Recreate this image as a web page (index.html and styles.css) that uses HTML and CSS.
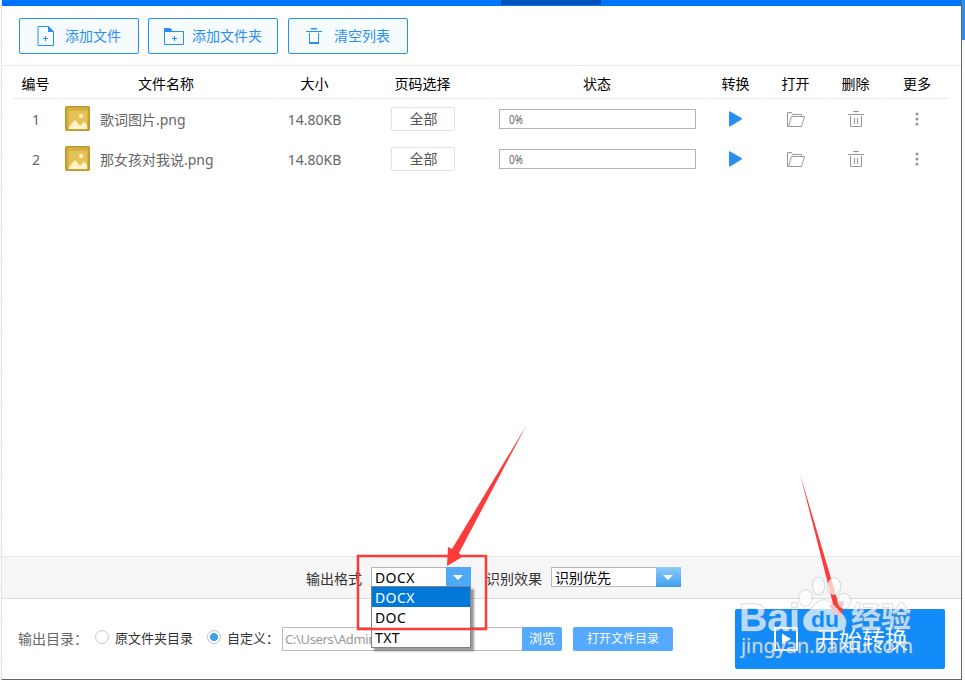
FILE: index.html
```html
<!DOCTYPE html>
<html lang="zh-CN">
<head>
  <meta charset="UTF-8">
  <meta name="viewport" content="width=device-width, initial-scale=1.0">
  <title>文件转换</title>
  <link rel="stylesheet" href="styles.css">
</head>
<body>
  <!-- shared icons -->
  <svg width="0" height="0" class="defs">
    <symbol id="picture" viewBox="0 0 25 25">
      <rect x=".75" y=".75" width="23.5" height="23.5" rx="1" fill="#d5b140" stroke="#bd9728" stroke-width="1.5"/>
      <rect x="4" y="5" width="18" height="18" fill="#e4c458"/>
      <path d="M4 23V21L10 14L15 20L19 15.500L22 19V23Z" fill="#fff3ca"/>
      <circle cx="16" cy="10" r="2" fill="#fff3ca"/>
    </symbol>
    <symbol id="play" viewBox="0 0 13 16">
      <path d="M0 1Q0 0 1.200 .5L12.500 7Q13.500 8 12.500 8.500L2 15Q0 16 0 14.500Z" fill="#2a8ff2"/>
    </symbol>
    <symbol id="open" viewBox="0 0 18 15">
      <path d="M1.500 14.500H.500V.500H4.500L5.500 2.500H14.500V4.500M1.500 14.500L4.500 4.500H17.500L14.500 14.500Z" fill="none" stroke="#999"/>
    </symbol>
    <symbol id="trash" viewBox="0 0 16 17">
      <path d="M5 .5H11M0 3.500H16M2.500 5V15.500H13.500V5M6.500 7V13M9.500 7V13" fill="none" stroke="#999"/>
    </symbol>
    <symbol id="dots" viewBox="0 0 4 14">
      <g fill="#999"><circle cx="2" cy="2" r="1.600"/><circle cx="2" cy="7" r="1.600"/><circle cx="2" cy="12" r="1.600"/></g>
    </symbol>
  </svg>

  <div class="window">
    <div class="titlebar"><div class="tab"></div></div>

    <div class="toolbar">
      <button class="tool">
        <svg width="18" height="20" viewBox="0 0 18 20" fill="none" stroke="#2a8ff2"><path d="M1 .5H11.500L16.500 5.500V19.500H1Z"/><path d="M11 0V6H17Z" fill="#2a8ff2" stroke="none"/><path d="M6 12.500H11M8.500 10V15"/></svg>
        <span>添加文件</span>
      </button>
      <button class="tool folder">
        <svg width="20" height="17" viewBox="0 0 20 17" fill="none" stroke="#2a8ff2"><path d="M.5 3.500H19.500V16.500H.500Z"/><path d="M0 0H6L8 2V4H0Z" fill="#2a8ff2" stroke="none"/><path d="M8 10.500H13M10.500 8V13"/></svg>
        <span>添加文件夹</span>
      </button>
      <button class="tool clear">
        <svg width="16" height="16" viewBox="0 0 16 16" fill="none" stroke="#2a8ff2"><path d="M5 .5H11" stroke-width="2"/><path d="M0 3.500H16M3.500 5V15.500M12.500 5V15.500"/><path d="M3 15H13" stroke-width="2"/></svg>
        <span>清空列表</span>
      </button>
    </div>

    <div class="files">
      <div class="row head">
        <div>编号</div><div>文件名称</div><div>大小</div><div>页码选择</div><div>状态</div><div>转换</div><div>打开</div><div>删除</div><div>更多</div>
      </div>
      <div class="row">
        <div>1</div>
        <div class="name"><svg width="25" height="25"><use href="#picture"/></svg><span>歌词图片.png</span></div>
        <div class="size">14.80KB</div>
        <div><button class="pages">全部</button></div>
        <div><div class="progress"><span>0%</span></div></div>
        <div class="convert"><svg width="13" height="16"><use href="#play"/></svg></div>
        <div><svg width="18" height="15"><use href="#open"/></svg></div>
        <div><svg width="16" height="17"><use href="#trash"/></svg></div>
        <div class="more"><svg width="4" height="14"><use href="#dots"/></svg></div>
      </div>
      <div class="row">
        <div>2</div>
        <div class="name"><svg width="25" height="25"><use href="#picture"/></svg><span>那女孩对我说.png</span></div>
        <div class="size">14.80KB</div>
        <div><button class="pages">全部</button></div>
        <div><div class="progress"><span>0%</span></div></div>
        <div class="convert"><svg width="13" height="16"><use href="#play"/></svg></div>
        <div><svg width="18" height="15"><use href="#open"/></svg></div>
        <div><svg width="16" height="17"><use href="#trash"/></svg></div>
        <div class="more"><svg width="4" height="14"><use href="#dots"/></svg></div>
      </div>
    </div>

    <div class="options">
      <label>输出格式</label>
      <div class="select format">
        <span>DOCX</span><i></i>
        <ul class="menu">
          <li class="active">DOCX</li>
          <li>DOC</li>
          <li>TXT</li>
        </ul>
      </div>
      <label class="effect-label">识别效果</label>
      <div class="select effect"><span>识别优先</span><i></i></div>
    </div>

    <div class="footer">
      <span class="dir-label">输出目录：</span>
      <i class="radio"></i><span class="radio-text source">原文件夹目录</span>
      <i class="radio checked"></i><span class="radio-text custom">自定义：</span>
      <div class="path">C:\Users\Admini</div>
      <button class="browse">浏览</button>
      <button class="open-dir">打开文件目录</button>
      <button class="start">
        <svg width="24" height="24" viewBox="0 0 24 24"><rect x="1" y="1" width="22" height="22" fill="none" stroke="#fff" stroke-width="2"/><path d="M8 6.500L17 12L8 17.500Z" fill="#fff"/></svg>
        <span>开始转换</span>
      </button>
    </div>
  </div>
  <div class="behind"></div>

  <!-- arrows and watermark over the window -->
  <svg class="marks" width="965" height="680" viewBox="0 0 965 680">
    <rect x="358" y="556" width="128" height="73" fill="none" stroke="#fd3b3b" stroke-width="2.500"/>
    <path d="M526 426L459 553L462 557L447 566L448 547L452 549Z" fill="#fd3b3b"/>
    <path d="M800 474L838 602L844 601L841 619L829 606L833 604L827 580Z" fill="#fd3b3b"/>
    <g class="watermark">
      <ellipse cx="805.500" cy="598" rx="6.500" ry="8"/>
      <ellipse cx="818.500" cy="586" rx="6" ry="8.500"/>
      <ellipse cx="834" cy="586.500" rx="6.500" ry="8.500"/>
      <ellipse cx="844" cy="601" rx="6.500" ry="7.500"/>
      <path d="M824 600C816 600 813 608 808 612C800 618 803 631 812 631H838C848 631 849 619 841 613C836 608 832 600 824 600Z"/>
      <text class="wm-bai" x="739" y="631" textLength="61" lengthAdjust="spacingAndGlyphs">Bai</text>
      <text class="wm-jy" x="851" y="628" textLength="60" lengthAdjust="spacingAndGlyphs">经验</text>
      <text class="wm-url" x="741" y="653" textLength="172" lengthAdjust="spacingAndGlyphs">jingyan.baidu.com</text>
    </g>
    <text class="wm-du" x="811" y="627" textLength="28" lengthAdjust="spacingAndGlyphs">du</text>
  </svg>
</body>
</html>
```

FILE: styles.css
```css
* {
  box-sizing: border-box;
}
body {
  margin: 0;
  width: 965px;
  height: 680px;
  display: flex;
  overflow: hidden;
  position: relative;
  font-family: "Noto Sans", "Noto Sans CJK SC", sans-serif;
  font-size: 14px;
  color: #666;
  padding-left: 1px;
  background: repeating-linear-gradient(#fafafa 0 35px, #e4e7ee 35px 36px) 0 12px;
}
button {
  font: inherit;
  padding: 0;
  border: none;
}
svg {
  display: block;
  flex: none;
}
.defs {
  position: absolute;
}
.window {
  width: 961px;
  height: 680px;
  display: flex;
  flex-direction: column;
  background: #fff;
  border-left: 1px solid #e3e4e8;
  border-right: 1px solid #666;
  border-bottom: 1px solid #666;
}
.behind {
  flex: 1;
  background: linear-gradient(#2a8ff2 40px, #fafafa 40px);
}
.titlebar {
  height: 6px;
  background: #0073ff;
  padding-left: 499px;
}
.tab {
  width: 100px;
  height: 5px;
  background: #0052b8;
}
.toolbar {
  height: 60px;
  padding: 12px 17px;
  display: flex;
  border-bottom: 1px solid #ebebeb;
}
.tool {
  display: flex;
  align-items: center;
  width: 120px;
  height: 36px;
  padding-left: 17px;
  border: 1px solid #2a8ff2;
  border-radius: 2px;
  background: #f5fbff;
  color: #2a8ff2;
  gap: 10px;
}
.tool span {
  padding-bottom: 2px;
}
.tool.folder {
  width: 130px;
  margin: 0 10px 0 9px;
  padding-left: 15px;
  gap: 8px;
}
.tool.clear {
  gap: 12px;
}

/* file list */
.files {
  flex: 1;
  padding-left: 11px;
}
.row {
  display: grid;
  grid-template-columns: 46px 211px 82px 130px 215px 58px 58px 58px 61px;
  column-gap: 2px;
  height: 40px;
}
.row > div {
  display: flex;
  align-items: center;
  justify-content: center;
}
.row.head {
  height: 33px;
  color: #000;
}
.row.head > div {
  border-bottom: 1px solid #ebebeb;
  padding: 1px 1px 0 0;
}
.row > .name {
  justify-content: flex-start;
  padding-left: 4px;
  gap: 10px;
}
.name svg {
  margin-bottom: 2px;
}
.row > .size {
  padding-right: 1px;
}
.row > .convert {
  padding: 0 2px 1px 0;
}
.row > .more {
  padding: 0 2px 1px 0;
}
.pages {
  width: 64px;
  height: 24px;
  border: 1px solid #dfe2ed;
  border-radius: 2px;
  background: #fff;
  color: #555;
  line-height: 22px;
  padding-left: 1px;
}
.progress {
  width: 197px;
  height: 20px;
  border: 1px solid #b4b4b4;
  padding-left: 9px;
  font-size: 12px;
  line-height: 19px;
}
.progress span {
  display: inline-block;
  transform: scaleX(0.82);
  transform-origin: left;
}

/* format options */
.options {
  height: 43px;
  background: #f6f6f6;
  border-top: 1px solid #e8e8e8;
  border-bottom: 1px solid #dcdcdc;
  display: flex;
  padding: 10px 0 0 304px;
  color: #333;
}
.options label {
  line-height: 24px;
  width: 65px;
}
.options .effect-label {
  margin-left: 15px;
}
.select {
  position: relative;
  height: 20px;
  width: 100px;
  border: 1px solid #b8b8b8;
  background: #fff;
  color: #000;
  display: flex;
  justify-content: space-between;
  line-height: 19px;
  padding-left: 3px;
}
.select.format {
  letter-spacing: 0.4px;
}
.select.effect {
  width: 130px;
}
.select i {
  width: 25px;
  margin: -1px -1px -1px 0;
  padding-right: 1px;
  background: #4fa9f5;
  display: flex;
  justify-content: center;
  align-items: center;
}
.effect i {
  background: linear-gradient(#8fcbfb, #3d9ff0);
}
.select i::after {
  content: "";
  border: 5px solid transparent;
  border-top-color: #fff;
  border-bottom: none;
}
.menu {
  position: absolute;
  left: -1px;
  top: 18px;
  width: 100px;
  margin: 0;
  padding: 0;
  list-style: none;
  border: 1px solid #82828c;
  background: #fff;
  box-shadow: 3px 3px 2px rgba(0,0,0,0.4);
}
.menu li {
  height: 20px;
  line-height: 21px;
  padding-left: 3px;
}
.menu .active {
  background: #0078d7;
  color: #fff;
}

/* bottom bar */
.footer {
  height: 80px;
  display: flex;
  align-items: center;
  padding: 0 16px;
}
.dir-label {
  width: 77px;
  padding-bottom: 3px;
}
.radio {
  width: 14px;
  height: 14px;
  margin-top: -4px;
  border: 1px solid #c8c8c8;
  border-radius: 50%;
  background: #fff;
}
.radio.checked {
  border-color: #b8c4d0;
  background: radial-gradient(circle, #3ea2f2 3.7px, #fff 4.3px);
}
.radio-text {
  font-size: 13px;
  color: #333;
  padding: 0 0 3px 6px;
}
.source {
  width: 98px;
}
.custom {
  width: 61px;
  white-space: nowrap;
}
.path {
  width: 240px;
  height: 24px;
  border: 1px solid #bbb;
  border-right: none;
  padding-left: 2px;
  font-size: 13px;
  letter-spacing: -0.35px;
  line-height: 23px;
  color: #999;
}
.browse,
.open-dir {
  height: 24px;
  width: 40px;
  background: #55aaff;
  color: #fff;
  font-size: 13px;
  line-height: 20px;
  padding-bottom: 2px;
  border-radius: 0 2px 2px 0;
}
.open-dir {
  width: 100px;
  margin-left: 11px;
  font-size: 12px;
  padding-bottom: 0;
  border-radius: 2px;
}
.start {
  width: 210px;
  height: 60px;
  margin-left: auto;
  background: #118cf9;
  color: #fff;
  border-radius: 2px;
  display: flex;
  align-items: center;
  padding-left: 39px;
  gap: 18px;
  font-size: 23px;
}
.start span {
  padding-bottom: 3px;
}

.marks {
  position: absolute;
  left: 0;
  top: 0;
}
.watermark {
  fill: #fff;
  fill-opacity: 0.7;
  stroke: #999;
  stroke-opacity: 0.35;
  stroke-width: 1.5px;
  paint-order: stroke;
}
.wm-bai {
  font: bold 38px "Liberation Sans", sans-serif;
}
.wm-jy {
  font: bold 29px "Noto Sans CJK SC", sans-serif;
}
.wm-url {
  font: 20px "Noto Sans", sans-serif;
}
.wm-du {
  font: bold 22px "Liberation Sans", sans-serif;
  fill: #118cf9;
}
```
